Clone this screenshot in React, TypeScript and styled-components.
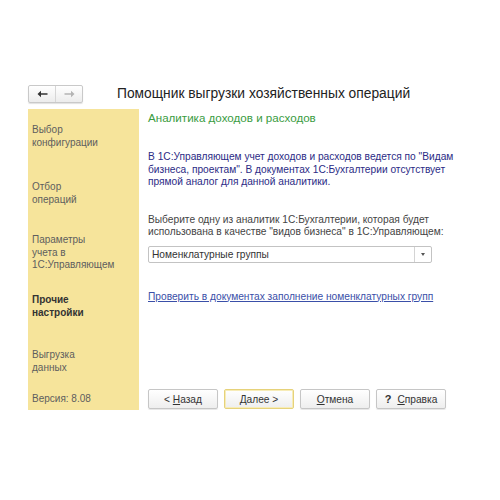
import React from "react";
import styled, { createGlobalStyle } from "styled-components";

const GlobalStyle = createGlobalStyle`
  html, body {
    margin: 0;
    padding: 0;
    background: #ffffff;
    font-family: "Liberation Sans", Arial, sans-serif;
  }
`;

const Window = styled.div`
  width: 424px;
  padding: 84px 0 0 28px;
  display: flex;
  flex-direction: column;
`;

const Header = styled.div`
  display: flex;
  align-items: center;
  height: 19px;
  margin-bottom: 6px;
`;

const NavGroup = styled.div`
  display: flex;
  width: 55px;
  height: 18px;
  border: 1px solid #c9c9c9;
  border-radius: 2px;
  background: linear-gradient(#ffffff, #ececec);
  box-sizing: border-box;
  box-shadow: 0 1px 1px rgba(0, 0, 0, 0.12);
`;

const NavButton = styled.div<{ $muted?: boolean }>`
  flex: 1;
  display: flex;
  align-items: center;
  justify-content: center;
  color: ${(p) => (p.$muted ? "#b4b4b4" : "#333")};
  & + & {
    border-left: 1px solid #d6d6d6;
  }
`;

const Title = styled.h1`
  margin: 0 0 0 34px;
  font-size: 13.8px;
  font-weight: normal;
  color: #222;
  white-space: nowrap;
`;

const Body = styled.div`
  display: flex;
  height: 301px;
`;

const Sidebar = styled.div`
  width: 111px;
  flex-shrink: 0;
  background: #f6e49b;
  display: flex;
  flex-direction: column;
  padding: 0 0 0 4px;
  box-sizing: border-box;
  font-size: 10px;
  color: #5e5e5e;
`;

const Step = styled.div<{ $top: number; $active?: boolean }>`
  margin-top: ${(p) => p.$top}px;
  line-height: 12.5px;
  font-weight: ${(p) => (p.$active ? "bold" : "normal")};
  color: ${(p) => (p.$active ? "#333" : "#5e5e5e")};
`;

const Version = styled.div`
  margin-top: auto;
  margin-bottom: 5px;
  line-height: 12.5px;
`;

const Main = styled.div`
  flex: 1;
  display: flex;
  flex-direction: column;
  padding-left: 9px;
  font-size: 10.2px;
  white-space: nowrap;
`;

const Heading = styled.div`
  color: #3a9c3f;
  font-size: 11.6px;
  margin-top: 1px;
  line-height: 15px;
`;

const Note = styled.p`
  margin: 26px 0 0;
  color: #2b2b85;
  line-height: 12.5px;
`;

const Prompt = styled.p`
  margin: 25px 0 0;
  color: #444;
  line-height: 12.5px;
`;

const Combo = styled.div`
  margin-top: 7.5px;
  width: 284px;
  height: 17px;
  display: flex;
  border: 1px solid #c3c3c3;
  border-radius: 2px;
  box-sizing: border-box;
  background: #fff;
`;

const ComboValue = styled.div`
  flex: 1;
  padding-left: 3px;
  line-height: 15px;
  color: #333;
`;

const ComboArrow = styled.div`
  width: 16px;
  border-left: 1px solid #d4d4d4;
  display: flex;
  align-items: center;
  justify-content: center;
  &::after {
    content: "";
    border-left: 2.5px solid transparent;
    border-right: 2.5px solid transparent;
    border-top: 3px solid #555;
  }
`;

const Link = styled.a`
  margin-top: 26.5px;
  color: #3a4fa8;
  text-decoration: underline;
  line-height: 13px;
  cursor: pointer;
`;

const Buttons = styled.div`
  margin-top: auto;
  margin-bottom: 1px;
  display: flex;
  gap: 6px;
`;

const Button = styled.div<{ $primary?: boolean }>`
  width: 70px;
  height: 20px;
  box-sizing: border-box;
  border: 1px solid ${(p) => (p.$primary ? "#e6d27a" : "#c6c6c6")};
  box-shadow: ${(p) =>
    p.$primary ? "inset 0 0 0 1px #f7ecb8" : "0 1px 1px rgba(0,0,0,0.1)"};
  border-radius: 2px;
  background: linear-gradient(#ffffff, #eeeeee);
  display: flex;
  align-items: center;
  justify-content: center;
  gap: 6px;
  color: #333;
  font-size: 10.2px;
  u {
    text-decoration: underline;
  }
`;

const Help = styled.span`
  font-weight: bold;
  font-size: 11px;
`;

const Arrow: React.FC<{ dir: "left" | "right" }> = ({ dir }) => (
  <svg width="11" height="8" viewBox="0 0 11 8">
    <g transform={dir === "right" ? "translate(11 0) scale(-1 1)" : undefined}>
      <path d="M0.5 4 L4 0.8 L4 3.2 L10.5 3.2 L10.5 4.8 L4 4.8 L4 7.2 Z" fill="currentColor" />
    </g>
  </svg>
);

export default function App() {
  return (
    <>
      <GlobalStyle />
      <Window>
        <Header>
          <NavGroup>
            <NavButton>
              <Arrow dir="left" />
            </NavButton>
            <NavButton $muted>
              <Arrow dir="right" />
            </NavButton>
          </NavGroup>
          <Title>Помощник выгрузки хозяйственных операций</Title>
        </Header>
        <Body>
          <Sidebar>
            <Step $top={15}>
              Выбор
              <br />
              конфигурации
            </Step>
            <Step $top={32}>
              Отбор
              <br />
              операций
            </Step>
            <Step $top={28}>
              Параметры
              <br />
              учета в
              <br />
              1С:Управляющем
            </Step>
            <Step $top={22.5} $active>
              Прочие
              <br />
              настройки
            </Step>
            <Step $top={30}>
              Выгрузка
              <br />
              данных
            </Step>
            <Version>Версия: 8.08</Version>
          </Sidebar>
          <Main>
            <Heading>Аналитика доходов и расходов</Heading>
            <Note>
              В 1С:Управляющем учет доходов и расходов ведется по "Видам
              <br />
              бизнеса, проектам". В документах 1С:Бухгалтерии отсутствует
              <br />
              прямой аналог для данной аналитики.
            </Note>
            <Prompt>
              Выберите одну из аналитик 1С:Бухгалтерии, которая будет
              <br />
              использована в качестве "видов бизнеса" в 1С:Управляющем:
            </Prompt>
            <Combo>
              <ComboValue>Номенклатурные группы</ComboValue>
              <ComboArrow />
            </Combo>
            <Link>Проверить в документах заполнение номенклатурных групп</Link>
            <Buttons>
              <Button>
                <span>
                  &lt; <u>Н</u>азад
                </span>
              </Button>
              <Button $primary>
                <span>
                  <u>Д</u>алее &gt;
                </span>
              </Button>
              <Button>
                <span>
                  <u>О</u>тмена
                </span>
              </Button>
              <Button>
                <Help>?</Help>
                <span>
                  <u>С</u>правка
                </span>
              </Button>
            </Buttons>
          </Main>
        </Body>
      </Window>
    </>
  );
}
